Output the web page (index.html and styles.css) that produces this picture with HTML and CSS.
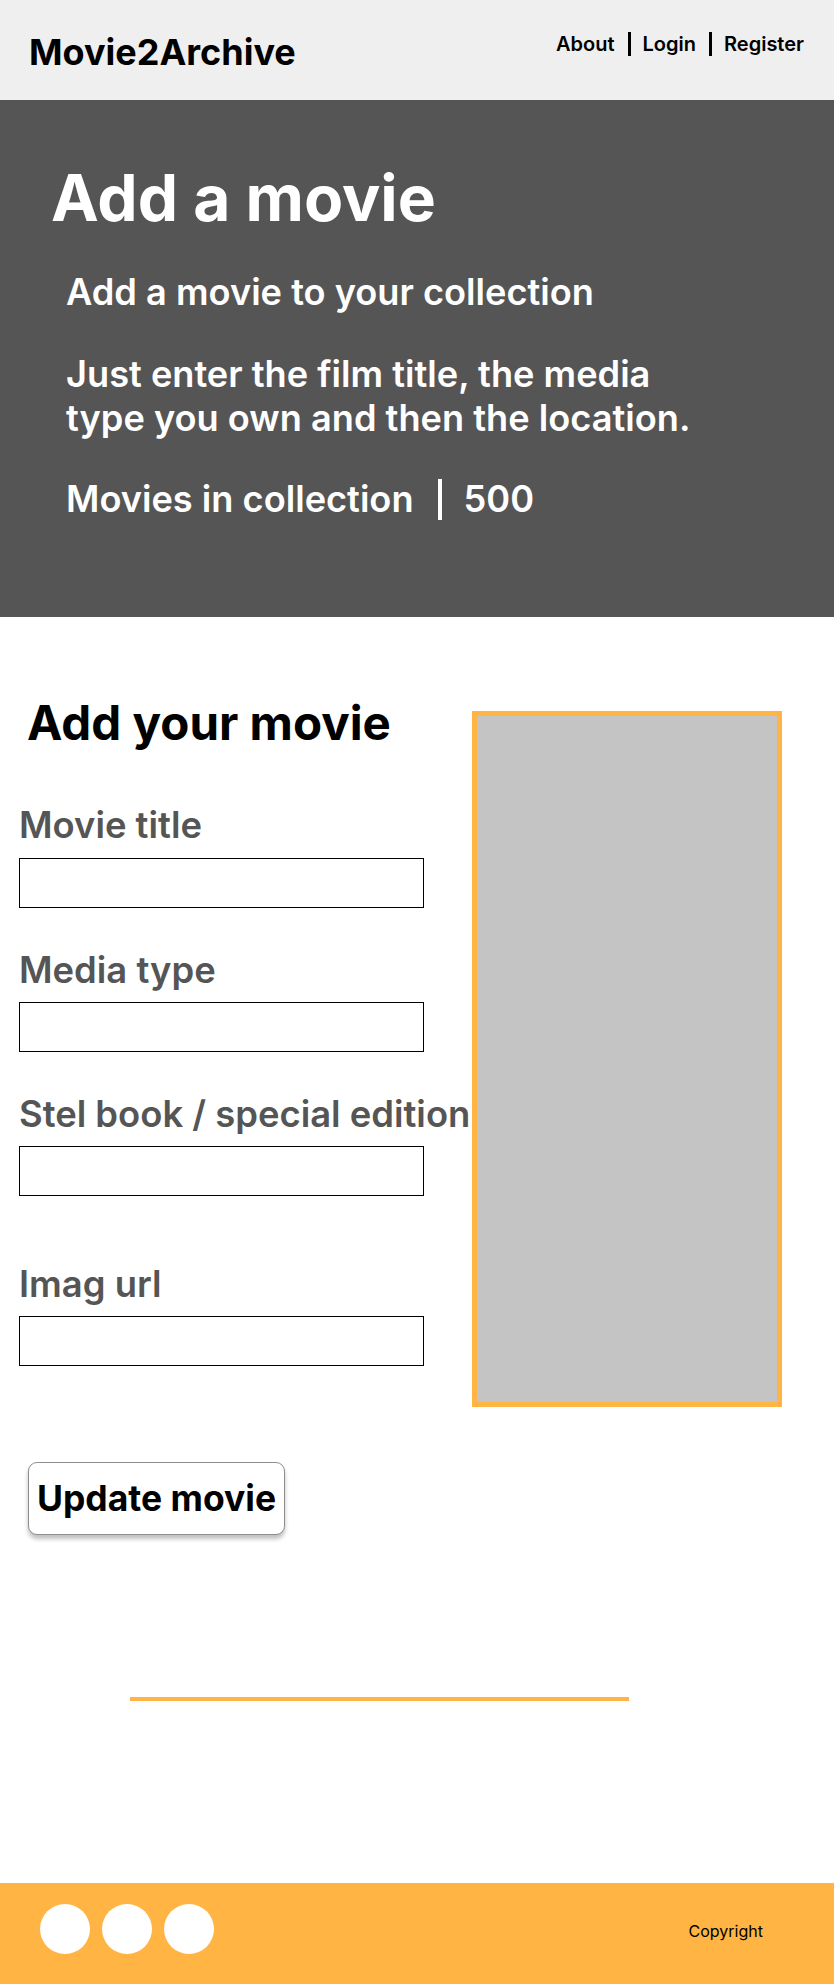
FILE: index.html
```
<!DOCTYPE html>
<html lang="en">
<head>
<meta charset="utf-8">
<title>Movie2Archive - Add a movie</title>
<link rel="stylesheet" href="styles.css">
</head>
<body>
<header class="site-header">
  <div class="brand">Movie2Archive</div>
  <nav class="nav">
    <a class="nav-link" href="#">About</a>
    <span class="nav-sep"></span>
    <a class="nav-link" href="#">Login</a>
    <span class="nav-sep"></span>
    <a class="nav-link" href="#">Register</a>
  </nav>
</header>

<section class="hero">
  <h1 class="hero-title">Add a movie</h1>
  <div class="hero-body">
    <p class="hero-sub">Add a movie to your collection</p>
    <p class="hero-text">Just enter the film title, the media<br>type you own and then the location.</p>
    <p class="hero-stat"><span>Movies in collection</span><span class="stat-sep"></span><span>500</span></p>
  </div>
</section>

<main class="form-section">
  <div class="form-grid">
    <div class="form-col">
      <h2 class="form-title">Add your movie</h2>
      <div class="field field-first">
        <label class="field-label">Movie title</label>
        <input class="field-input" type="text">
      </div>
      <div class="field">
        <label class="field-label">Media type</label>
        <input class="field-input" type="text">
      </div>
      <div class="field">
        <label class="field-label">Stel book / special edition</label>
        <input class="field-input" type="text">
      </div>
      <div class="field field-far">
        <label class="field-label">Imag url</label>
        <input class="field-input" type="text">
      </div>
    </div>
    <div class="poster"></div>
  </div>
  <button class="update-btn" type="button">Update movie</button>
  <div class="divider"></div>
</main>

<footer class="site-footer">
  <div class="socials">
    <span class="dot"></span>
    <span class="dot"></span>
    <span class="dot"></span>
  </div>
  <div class="copyright">Copyright</div>
</footer>
</body>
</html>
```
FILE: styles.css
```
* { box-sizing: border-box; }
html, body { margin: 0; padding: 0; }
body {
  width: 834px;
  min-height: 1984px;
  background: #ffffff;
  font-family: "Inter", "Noto Sans", sans-serif;
  color: #000;
}
p, h1, h2 { margin: 0; }

.site-header {
  height: 100px;
  background: #efefef;
  display: flex;
  justify-content: space-between;
  align-items: flex-start;
  padding: 31px 30px 0 29px;
}
.brand {
  font-size: 36px;
  font-weight: 700;
  line-height: 1.21;
}
.nav {
  display: flex;
  align-items: center;
  margin-top: 1px;
}
.nav-link {
  color: #000;
  text-decoration: none;
  font-size: 20px;
  font-weight: 600;
  line-height: 24px;
}
.nav-sep {
  width: 3px;
  height: 24px;
  background: #000;
  margin: 0 12px 0 13px;
}

.hero {
  height: 517px;
  background: #555555;
  color: #fff;
  padding: 59px 0 0 51px;
}
.hero-title {
  font-size: 64px;
  font-weight: 700;
  line-height: 1.21;
}
.hero-body { padding-left: 15px; }
.hero-sub {
  font-size: 36.2px;
  font-weight: 600;
  line-height: 1.21;
  margin-top: 35px;
}
.hero-text {
  font-size: 36.2px;
  font-weight: 600;
  line-height: 44px;
  margin-top: 37px;
}
.hero-stat {
  display: flex;
  align-items: stretch;
  font-size: 36.2px;
  font-weight: 600;
  line-height: 1.21;
  margin-top: 38px;
}
.stat-sep {
  width: 4px;
  background: #fff;
  margin: 1px 22px 2px 24px;
}

.form-section {
  padding: 77px 0 0 19px;
}
.form-grid {
  display: grid;
  grid-template-columns: 453px 310px;
  align-items: start;
}
.form-title {
  font-size: 47.5px;
  font-weight: 700;
  line-height: 1.21;
  margin-left: 8px;
}
.field {
  display: flex;
  flex-direction: column;
  margin-top: 40px;
}
.field-first { margin-top: 52px; }
.field-far { margin-top: 66px; }
.field-label {
  font-size: 36.4px;
  font-weight: 600;
  line-height: 1.21;
  color: #555555;
  white-space: nowrap;
}
.field-input {
  width: 405px;
  height: 50px;
  margin-top: 10px;
  border: 1px solid #000;
  background: #fff;
  padding: 0 8px;
  font: inherit;
  font-size: 18px;
  outline: none;
}
.poster {
  margin-top: 17px;
  width: 310px;
  height: 696px;
  background: #c4c4c4;
  border: 5px solid #ffb443;
}

.update-btn {
  display: block;
  margin: 55px 0 0 9px;
  height: 73px;
  padding: 0 8px;
  background: #fff;
  border: 1px solid #8e8e8e;
  border-radius: 9px;
  box-shadow: 0 4px 4px rgba(0, 0, 0, 0.25);
  font-family: "Inter", "Noto Sans", sans-serif;
  font-size: 35.5px;
  font-weight: 700;
  color: #000;
  line-height: 1;
}
.divider {
  width: 499px;
  height: 4px;
  background: #ffb443;
  margin: 162px 0 0 111px;
}

.site-footer {
  margin-top: 182px;
  height: 101px;
  background: #ffb443;
  display: flex;
  align-items: flex-start;
  justify-content: space-between;
  padding: 21px 71px 0 40px;
}
.socials {
  display: flex;
  gap: 12px;
}
.dot {
  width: 50px;
  height: 50px;
  border-radius: 50%;
  background: #fff;
}
.copyright {
  margin-top: 18px;
  font-size: 16px;
  font-weight: 400;
  line-height: 1.21;
}
```
